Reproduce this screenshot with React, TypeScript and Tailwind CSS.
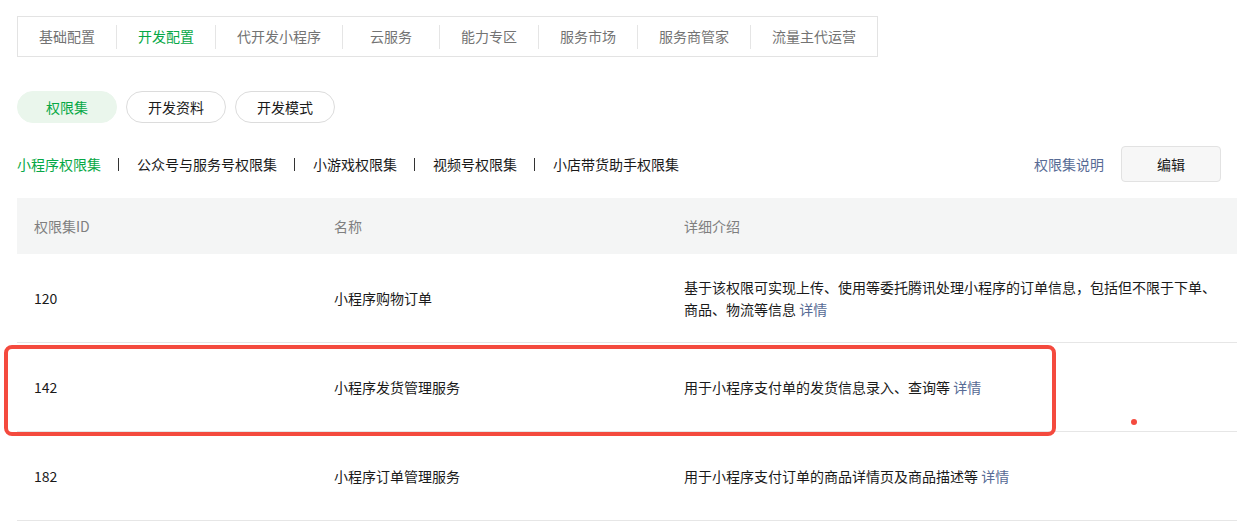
const topTabs = ['基础配置', '开发配置', '代开发小程序', '云服务', '能力专区', '服务市场', '服务商管家', '流量主代运营']
const pills = ['权限集', '开发资料', '开发模式']
const subNav = ['小程序权限集', '公众号与服务号权限集', '小游戏权限集', '视频号权限集', '小店带货助手权限集']

interface Row {
  id: string
  name: string
  desc: string[]
}

const rows: Row[] = [
  {
    id: '120',
    name: '小程序购物订单',
    desc: ['基于该权限可实现上传、使用等委托腾讯处理小程序的订单信息，包括但不限于下单、', '商品、物流等信息'],
  },
  { id: '142', name: '小程序发货管理服务', desc: ['用于小程序支付单的发货信息录入、查询等'] },
  { id: '182', name: '小程序订单管理服务', desc: ['用于小程序支付订单的商品详情页及商品描述等'] },
]

export default function App() {
  return (
    <div
      className="relative min-h-[532px] bg-white pl-[17px] pr-[21px] pt-[16px] text-[14px] text-[#1a1a1a]"
      style={{ fontFamily: '"PingFang SC", "Noto Sans CJK SC", "Liberation Sans", sans-serif' }}
    >
      {/* top tabs */}
      <div className="flex h-[41px] w-fit items-center border border-[#e3e3e3]">
        {topTabs.map((tab, i) => (
          <div key={tab} className="flex items-center">
            {i > 0 && <span className="h-6 w-px bg-[#e5e5e5]" />}
            <span
              className={`min-w-[96px] px-[21px] text-center ${i === 1 ? 'text-[#07a846]' : 'text-[#737373]'}`}
            >
              {tab}
            </span>
          </div>
        ))}
      </div>

      {/* pills */}
      <div className="mt-[34px] flex gap-[9px]">
        {pills.map((p, i) => (
          <button
            key={p}
            className={`h-8 w-[100px] rounded-full border ${
              i === 0 ? 'border-[#eaf6ec] bg-[#eaf6ec] text-[#07a846]' : 'border-[#dcdcdc] bg-white text-[#1a1a1a]'
            }`}
          >
            {p}
          </button>
        ))}
      </div>

      {/* sub nav */}
      <div className="mt-[23px] flex h-9 items-center justify-between">
        <div className="flex items-center">
          {subNav.map((s, i) => (
            <div key={s} className="flex items-center">
              {i > 0 && <span className="ml-[17px] mr-[18px] h-[13px] w-px bg-[#333]" />}
              <span className={i === 0 ? 'text-[#07a846]' : 'text-[#1a1a1a]'}>{s}</span>
            </div>
          ))}
        </div>
        <div className="flex items-center gap-[17px] pr-[16px]">
          <a className="text-[#576b95]">权限集说明</a>
          <button className="h-9 w-[100px] rounded-[4px] border border-[#e2e2e2] bg-[#f7f7f7] text-[#1a1a1a]">编辑</button>
        </div>
      </div>

      {/* table */}
      <div className="mt-[16px]">
        <div className="flex h-14 items-center bg-[#f4f5f5] text-[#7f7f7f]">
          <div className="w-[300px] pl-[17px]">权限集ID</div>
          <div className="w-[350px] pl-[17px]">名称</div>
          <div className="flex-1 pl-[17px]">详细介绍</div>
        </div>
        {rows.map((r) => (
          <div key={r.id} className="flex h-[89px] items-center border-b border-[#e6e6e6] leading-[22px]">
            <div className="w-[300px] pl-[17px]">{r.id}</div>
            <div className="w-[350px] pl-[17px]">{r.name}</div>
            <div className="flex-1 pl-[17px] pr-[10px]">
              {r.desc.map((line, i) => (
                <div key={i}>
                  {line}
                  {i === r.desc.length - 1 && (
                    <>
                      {' '}
                      <a className="text-[#576b95]">详情</a>
                    </>
                  )}
                </div>
              ))}
            </div>
          </div>
        ))}
      </div>

      {/* annotation overlay */}
      <div className="pointer-events-none absolute left-[4px] top-[345px] h-[91px] w-[1052px] rounded-[8px] border-4 border-[#f44a3e]" />
      <div className="pointer-events-none absolute left-[1131px] top-[419px] h-[6px] w-[6px] rounded-full bg-[#f44a3e]" />
    </div>
  )
}
